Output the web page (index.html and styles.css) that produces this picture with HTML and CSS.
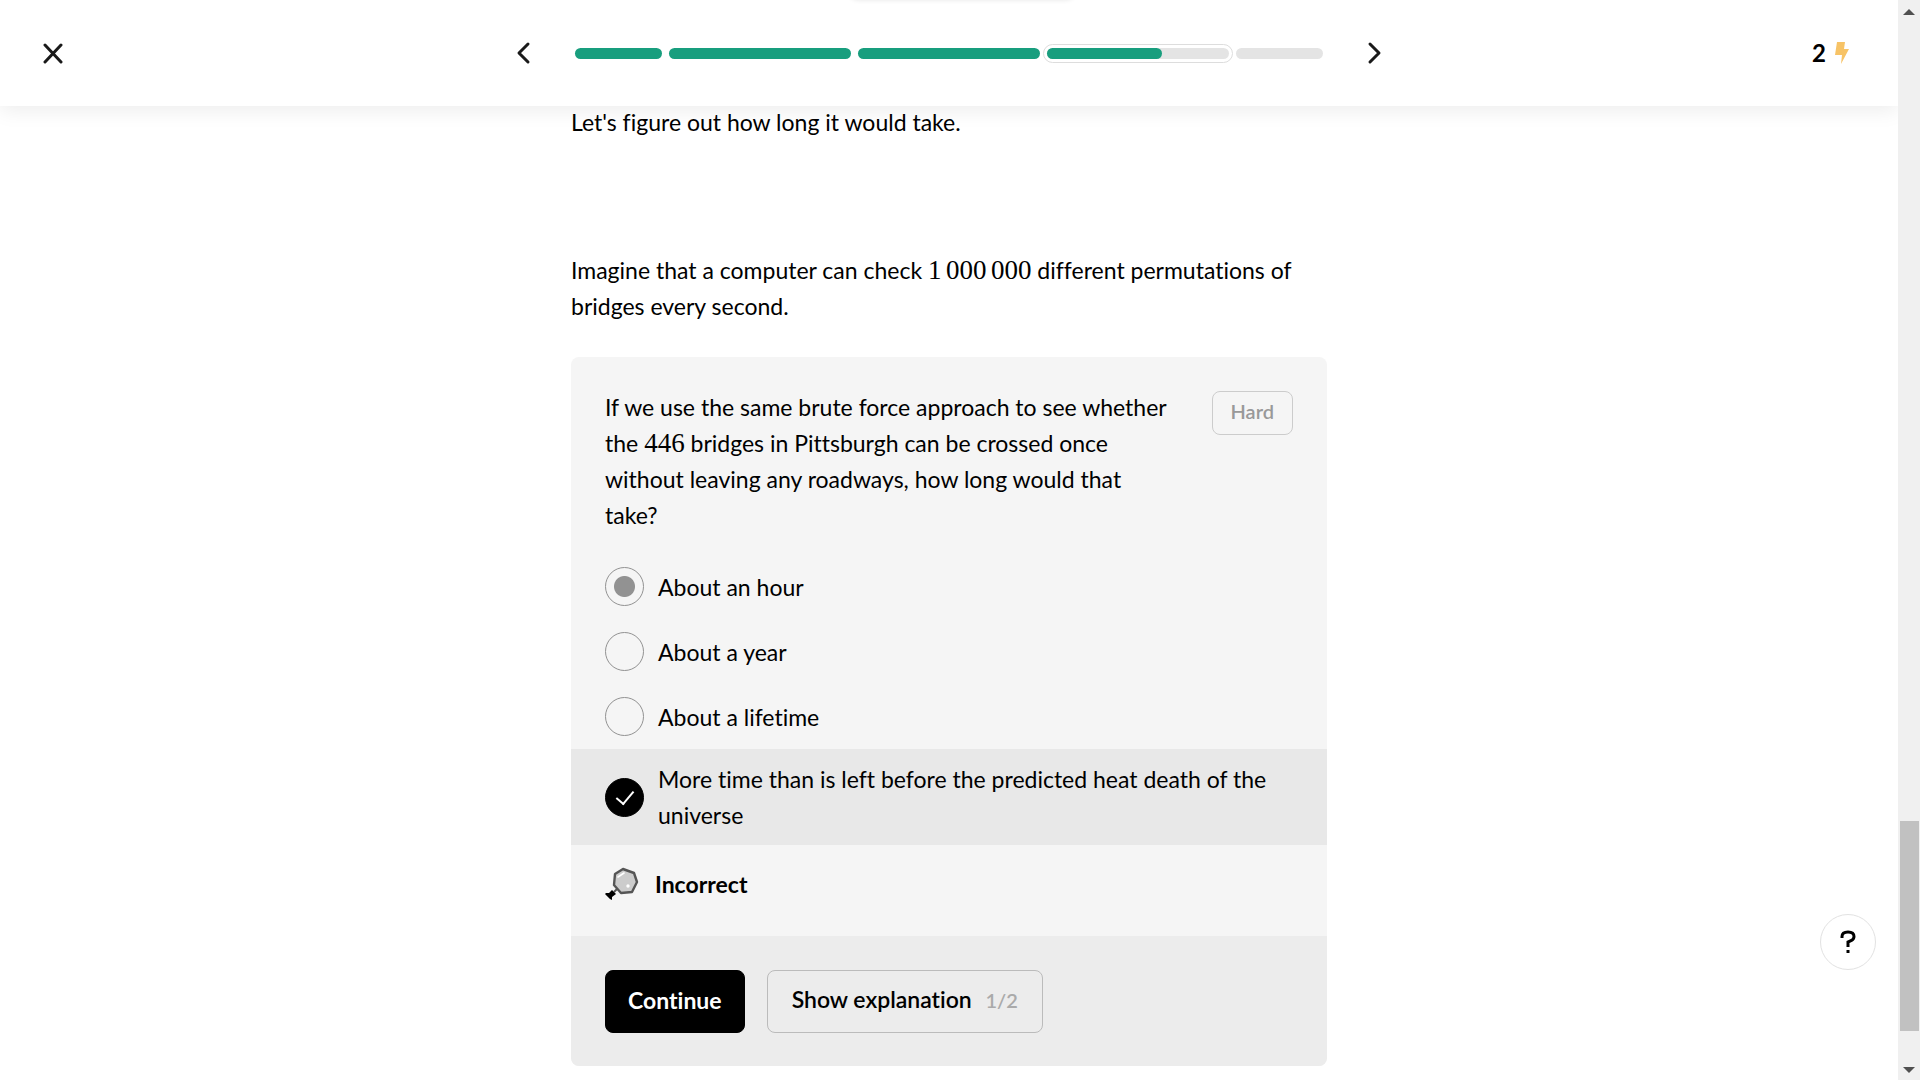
FILE: index.html
```html
<!DOCTYPE html>
<html lang="en">
<head>
<meta charset="utf-8">
<meta name="viewport" content="width=device-width, initial-scale=1">
<title>Bridges of Pittsburgh</title>
<link rel="stylesheet" href="styles.css">
</head>
<body>
<div class="page">
  <header class="topbar">
    <div class="topbar-left">
      <button class="icon-button" type="button" aria-label="Close">
        <svg width="22" height="22" viewBox="0 0 22 22"><path d="M3 3l16 17M19 3L3 20"/></svg>
      </button>
    </div>
    <nav class="lesson-nav" aria-label="Lesson progress">
      <button class="icon-button" type="button" aria-label="Previous">
        <svg width="16" height="24" viewBox="0 0 16 24"><path d="M13 3L4 12l9 9"/></svg>
      </button>
      <div class="progress">
        <span class="segment short done"></span>
        <span class="segment done"></span>
        <span class="segment done"></span>
        <span class="segment current"><span class="fill" style="width: 63%"></span></span>
        <span class="segment short"></span>
      </div>
      <button class="icon-button" type="button" aria-label="Next">
        <svg width="16" height="24" viewBox="0 0 16 24"><path d="M3 3l9 9-9 9"/></svg>
      </button>
    </nav>
    <div class="streak">
      <span>2</span>
      <svg class="bolt" width="14" height="24" viewBox="0 0 14 24"><path d="M2 1h8L9 8h5L6 23 7 14H0z"/></svg>
    </div>
    <div class="top-tab"></div>
  </header>

  <main class="lesson">
    <p class="intro">Let's figure out how long it would take.</p>
    <p class="setup">Imagine that a computer can check <span class="math">1&#8198;000&#8198;000</span> different permutations of bridges every second.</p>

    <form class="card">
      <div class="question">
        <p id="question-text">If we use the same brute force approach to see whether the <span class="math">446</span> bridges in Pittsburgh can be crossed once without leaving any roadways, how long would that take?</p>
        <span class="badge">Hard</span>
      </div>
      <div role="radiogroup" aria-labelledby="question-text">
        <label class="option"><input type="radio" name="answer" checked><span>About an hour</span></label>
        <label class="option"><input type="radio" name="answer"><span>About a year</span></label>
        <label class="option"><input type="radio" name="answer"><span>About a lifetime</span></label>
        <label class="option solution"><input type="radio" name="answer"><span>More time than is left before the predicted heat death of the universe</span></label>
      </div>
      <div class="result">
        <svg width="34" height="34" viewBox="0 0 34 34">
          <path d="M18 2l11 4 3 9-5 10-11 1-7-8 1-11z" fill="#ccc" stroke="#555" stroke-width="2.4" stroke-linejoin="round"/>
          <path d="M13 10l6-4" stroke="#fff" stroke-width="1.6" stroke-linecap="round"/>
          <circle cx="23" cy="19" r="1.7" fill="#fff"/>
          <path d="M9 25l3-3" stroke="#555" stroke-width="2"/>
          <path d="M7 23l4 4-4 3v3l-2-1-5-5 1-1 3 0z" fill="#000"/>
        </svg>
        <strong>Incorrect</strong>
      </div>
      <div class="actions">
        <button class="button primary" type="button">Continue</button>
        <button class="button secondary" type="button">Show explanation <span class="count">1/2</span></button>
      </div>
    </form>
  </main>
  <button class="help" type="button" aria-label="Help">
    <svg width="18" height="24" viewBox="0 0 18 24"><path d="M3 8V6.500Q3 2 9 2Q15 2 15 6.500Q15 9 12.500 10.500L9 12V17" fill="none" stroke="#000" stroke-width="3"/><path d="M7.500 20h3v3h-3z"/></svg>
  </button>
</div>
<div class="scrollbar" aria-hidden="true">
  <svg width="12" height="6" viewBox="0 0 12 6"><path d="M6 0l6 6H0z"/></svg>
  <div class="track"><div class="thumb" style="height: 20.7%"></div></div>
  <svg width="12" height="6" viewBox="0 0 12 6"><path d="M0 0h12L6 6z"/></svg>
</div>
</body>
</html>
```
FILE: styles.css
```css
* { box-sizing: border-box; }

body {
  margin: 0;
  min-height: 100vh;
  display: flex;
  background: #fff;
  color: #000;
  font: 23px/36px Lato, "Open Sans", sans-serif;
  font-variant-ligatures: none;
}

p { margin: 0; }

button {
  font: inherit;
  font-variant-ligatures: none;
  color: inherit;
  cursor: pointer;
}

.page {
  flex: 1;
  min-width: 0;
  position: relative;
  overflow: hidden;
}

.topbar {
  position: relative;
  display: grid;
  grid-template-columns: 1fr auto 1fr;
  align-items: center;
  padding: 41px 42px;
  box-shadow: 0 4px 20px rgba(0, 0, 0, 0.08);
}

.top-tab {
  position: absolute;
  left: 850px;
  top: -20px;
  width: 224px;
  height: 20px;
  border-radius: 8px;
  box-shadow: 0 0 5px rgba(0, 0, 0, 0.1);
}

.icon-button {
  display: flex;
  padding: 0;
  border: 0;
  background: none;
}

.icon-button path {
  fill: none;
  stroke: #1a1a1a;
  stroke-width: 3;
  stroke-linecap: round;
  stroke-linejoin: round;
}

.lesson-nav {
  display: flex;
  align-items: center;
  gap: 44px;
}

.progress {
  display: flex;
  gap: 7px;
  width: 748px;
}

.segment {
  flex: 182 1 0;
  height: 11px;
  border-radius: 6px;
  background: #e4e4e4;
}

.segment.short { flex-grow: 87; }

.segment.done,
.fill { background: #189e7e; }

.segment.current {
  outline: 1px solid #ddd;
  outline-offset: 3px;
}

.fill {
  display: block;
  height: 100%;
  border-radius: 6px;
}

.streak {
  display: flex;
  justify-content: flex-end;
  align-items: center;
  gap: 9px;
  padding-right: 7px;
  font-size: 24px;
  line-height: 24px;
  font-weight: 700;
}

.bolt { fill: #f7c366; }

.lesson {
  max-width: 756px;
  margin: -2px auto 0;
  padding-bottom: 15px;
}

.setup { margin: 112px 0 33px; }

.math {
  font-family: "Liberation Serif", serif;
  font-size: 27px;
  line-height: 24px;
}

.card {
  border-radius: 8px;
  background: #f5f5f5;
  overflow: hidden;
}

.question {
  display: flex;
  justify-content: space-between;
  align-items: flex-start;
  gap: 36px;
  padding: 32px 34px 21px;
}

.badge {
  flex: none;
  margin-top: 2px;
  padding: 2px 18px 6px;
  border: 1px solid #ccc;
  border-radius: 8px;
  color: #999;
  font-size: 20px;
  line-height: 34px;
  font-weight: 600;
}

.option {
  display: flex;
  align-items: center;
  gap: 14px;
  padding: 13px 34px;
}

.option input {
  appearance: none;
  flex: none;
  width: 39px;
  height: 39px;
  margin: 0;
  border: 1px solid #929292;
  border-radius: 50%;
}

.option input:checked { background: radial-gradient(circle, #929292 10px, transparent 11px); }

.option.solution {
  padding: 12px 34px;
  background: #e8e8e8;
}

.option.solution input {
  display: grid;
  place-items: center;
  border-color: #000;
  background: #000;
}

.option.solution input::after {
  content: "";
  width: 8px;
  height: 15px;
  margin-bottom: 4px;
  border: solid #fff;
  border-width: 0 2px 2px 0;
  transform: rotate(40deg);
}

.result {
  display: flex;
  align-items: center;
  gap: 16px;
  padding: 21px 34px 34px;
}

.actions {
  display: flex;
  gap: 22px;
  padding: 34px 34px 33px;
  background: #ececec;
}

.button {
  padding: 10px 22px 14px;
  border: 1px solid #000;
  border-radius: 8px;
  font-weight: 700;
}

.primary {
  background: #000;
  color: #fff;
}

.secondary {
  padding: 10px 24px 14px;
  border-color: #bbb;
  background: none;
  font-weight: 600;
}

.count {
  margin-left: 8px;
  color: #aaa;
  font-size: 20px;
}

.help {
  position: absolute;
  right: 22px;
  bottom: 111px;
  width: 56px;
  height: 56px;
  display: grid;
  place-items: center;
  padding: 0;
  border: 1px solid #e2e2e2;
  border-radius: 50%;
  background: #fff;
}

.scrollbar {
  flex: none;
  width: 22px;
  display: flex;
  flex-direction: column;
  align-items: center;
  padding: 9px 0 8px;
  background: #f0f0f0;
  fill: #505050;
}

.track {
  flex: 1;
  align-self: stretch;
  display: flex;
  flex-direction: column;
  justify-content: flex-end;
  padding: 0 1px 36px 2px;
}

.thumb { background: #c1c1c1; }
```
